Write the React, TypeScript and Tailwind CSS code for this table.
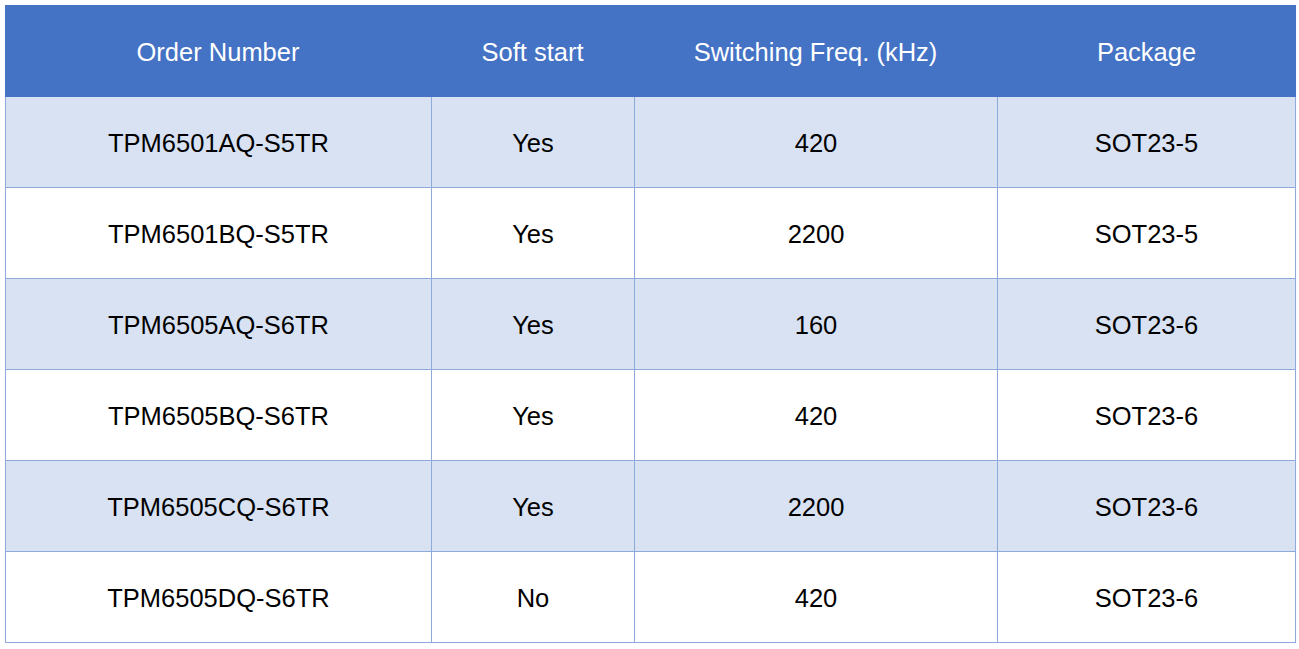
const rows = [
  ["TPM6501AQ-S5TR", "Yes", "420", "SOT23-5"],
  ["TPM6501BQ-S5TR", "Yes", "2200", "SOT23-5"],
  ["TPM6505AQ-S6TR", "Yes", "160", "SOT23-6"],
  ["TPM6505BQ-S6TR", "Yes", "420", "SOT23-6"],
  ["TPM6505CQ-S6TR", "Yes", "2200", "SOT23-6"],
  ["TPM6505DQ-S6TR", "No", "420", "SOT23-6"],
];

const headers = ["Order Number", "Soft start", "Switching Freq. (kHz)", "Package"];

export default function App() {
  return (
    <div className="min-h-screen bg-white pl-[5px] pt-[5px] font-['Liberation_Sans',Arial,sans-serif] text-[25.5px]">
      <div className="w-[1291px]">
        <div className="grid h-[92px] grid-cols-[426px_203px_363px_299px] bg-[#4472C4] text-white">
          {headers.map((h) => (
            <div key={h} className="flex items-center justify-center pt-[2px]">
              {h}
            </div>
          ))}
        </div>
        {rows.map((r, i) => (
          <div
            key={r[0]}
            className={
              "grid h-[91px] grid-cols-[426px_203px_363px_299px] border-b border-[#8EAADB] text-black " +
              (i % 2 === 0 ? "bg-[#D9E2F3]" : "bg-white")
            }
          >
            {r.map((c, j) => (
              <div
                key={j}
                className={
                  "flex items-center justify-center border-l border-[#8EAADB] pt-[2px]" + (j === 3 ? " border-r" : "")
                }
              >
                {c}
              </div>
            ))}
          </div>
        ))}
      </div>
    </div>
  );
}
